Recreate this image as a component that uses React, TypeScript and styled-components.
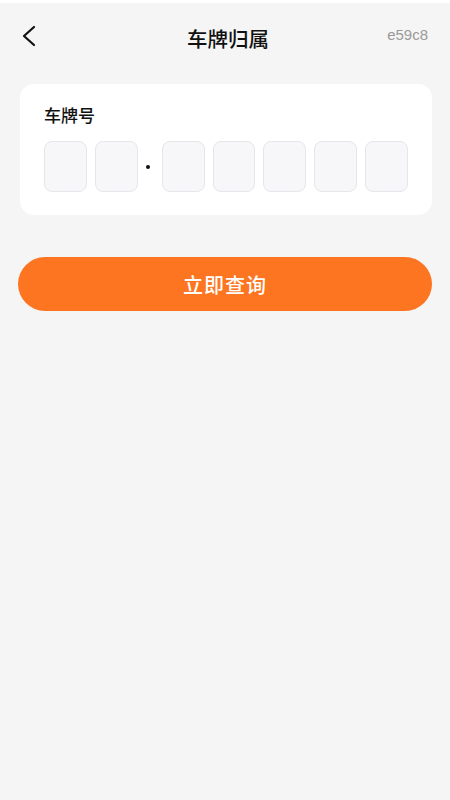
import styled, { createGlobalStyle } from "styled-components";

const GlobalStyle = createGlobalStyle`
  html, body {
    margin: 0;
    padding: 0;
    background: #f5f5f5;
    font-family: "Noto Sans CJK SC", "Noto Sans", sans-serif;
  }
`

const Page = styled.div`
  width: 450px;
  min-height: 800px;
  background: #f5f5f5;
  border-top: 3px solid #ffffff;
  box-sizing: border-box;
  padding: 0 18px;
`

const Header = styled.div`
  height: 72px;
  display: grid;
  grid-template-columns: 60px 1fr 60px;
  align-items: center;
  margin-top: -3px;
`

const BackButton = styled.div`
  display: flex;
  align-items: center;
  padding-left: 3px;
`

const Title = styled.h1`
  margin: 0;
  text-align: center;
  font-size: 20.5px;
  font-weight: 500;
  color: #111;
  padding-left: 6px;
  margin-top: 3px;
`

const Code = styled.span`
  text-align: right;
  font-family: "Liberation Sans", Arial, sans-serif;
  font-size: 15px;
  color: #9a9a9a;
  padding-right: 4px;
  margin-top: -3px;
`

const Card = styled.div`
  margin: 12px 0 0 2px;
  background: #ffffff;
  border-radius: 14px;
  padding: 20px 24px 22px 24px;
  height: 131px;
  box-sizing: border-box;
`

const Label = styled.div`
  font-size: 17px;
  font-weight: 500;
  color: #111;
  line-height: 22px;
`

const Plate = styled.div`
  display: flex;
  align-items: center;
  gap: 8px;
  margin-top: 15px;
`

const Slot = styled.div`
  width: 43px;
  height: 51px;
  box-sizing: border-box;
  background: #f7f7fa;
  border: 1.5px solid #e6e6ea;
  border-radius: 8px;
`

const Dot = styled.span`
  width: 4px;
  height: 4px;
  border-radius: 50%;
  background: #111;
  margin: 0 4px 0 0;
`

const QueryButton = styled.button`
  display: block;
  width: 414px;
  height: 54px;
  margin-top: 42px;
  border: none;
  border-radius: 27px;
  background: #fd7521;
  color: #ffffff;
  font-family: "Noto Sans CJK SC", sans-serif;
  font-size: 20px;
  font-weight: 500;
  letter-spacing: 1px;
`

export default function App() {
  return (
    <>
      <GlobalStyle />
      <Page>
        <Header>
          <BackButton>
            <svg width="16" height="22" viewBox="0 0 16 22" fill="none">
              <path d="M13 2 L3 11 L13 20" stroke="#111" strokeWidth="2.2" strokeLinecap="round" strokeLinejoin="round" />
            </svg>
          </BackButton>
          <Title>车牌归属</Title>
          <Code>e59c8</Code>
        </Header>
        <Card>
          <Label>车牌号</Label>
          <Plate>
            <Slot />
            <Slot />
            <Dot />
            <Slot />
            <Slot />
            <Slot />
            <Slot />
            <Slot />
          </Plate>
        </Card>
        <QueryButton>立即查询</QueryButton>
      </Page>
    </>
  )
}
